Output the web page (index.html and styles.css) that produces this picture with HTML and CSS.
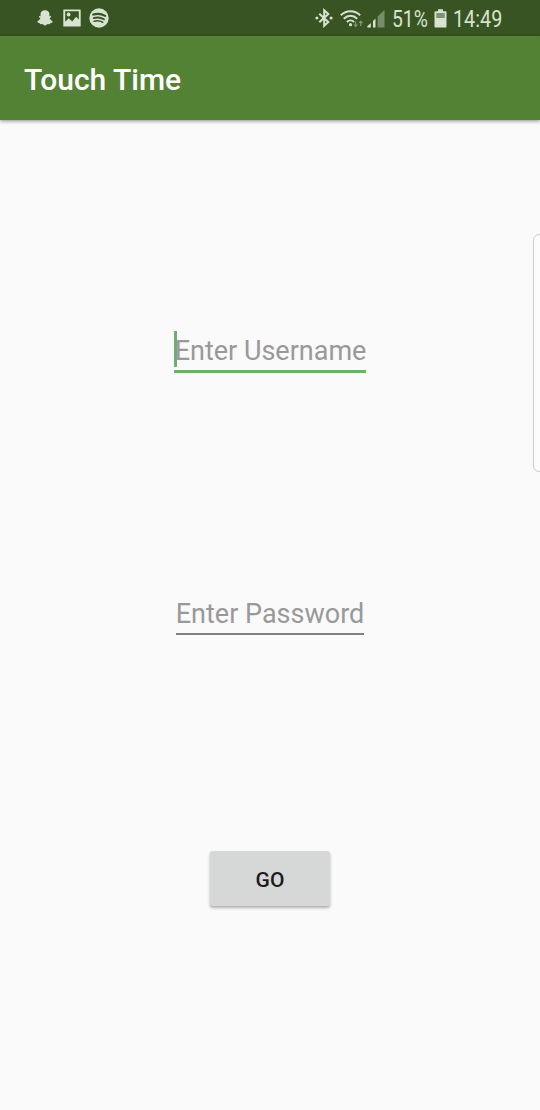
FILE: index.html
```html
<!DOCTYPE html>
<html lang="en">
<head>
<meta charset="utf-8">
<title>Touch Time</title>
<link rel="stylesheet" href="styles.css">
</head>
<body>
<div class="screen">
  <div class="status">
    <div class="notifications">
      <svg width="16" height="16" viewBox="0 0 16 16"><path fill="currentColor" d="M8 .3C5 .3 3.400 2.100 3.500 4.500l.1 1.700-1.600-.1-.1 1.100 1.500.9C2.900 9.700 1.800 10.900.3 11.500c.3 1.200 1.300 1.500 2.300 1.600l.4 1.100 2.300-.1L8 15.800l2.700-1.700 2.300.1.4-1.100c1-.1 2-.4 2.300-1.600-1.500-.6-2.600-1.800-3.100-3.400l1.500-.9-.1-1.100-1.600.1.1-1.700C12.600 2.100 11 .3 8 .3z"/></svg>
      <svg width="18" height="18" viewBox="0 0 18 18"><path fill="currentColor" fill-rule="evenodd" d="M1 .4h16q.7 0 .7.7v15.800q0 .7-.7.7H1q-.7 0-.7-.7V1.100Q.3.400 1 .4zM2.200 2.300v10.500l3.600-3.600 3.400 3.200 3.900-4.600 2.700 2.800V2.300z"/><circle cx="5.600" cy="5.500" r="1.900" fill="currentColor"/></svg>
      <svg width="20" height="20" viewBox="0 0 20 20"><circle cx="10" cy="10" r="9.700" fill="currentColor"/><g fill="none" stroke="#385422" stroke-linecap="round"><path stroke-width="2.100" d="M4.200 6.600c4-1.200 8.400-.8 12 1.200"/><path stroke-width="1.800" d="M4.700 10.100c3.400-1 7.200-.6 10.300 1.100"/><path stroke-width="1.500" d="M5.100 13.300c3-.8 6-.5 8.700 1"/></g></svg>
    </div>
    <div class="system">
      <svg width="18" height="20" viewBox="0 0 18 20"><path fill="none" stroke="currentColor" stroke-width="2" d="M4.300 5.800l9 8.200L9.200 17.700V2.300l4.100 3.700-9 8.200"/><circle cx="1.900" cy="10" r="1.500" fill="currentColor"/><circle cx="16.100" cy="10" r="1.500" fill="currentColor"/></svg>
      <svg class="wifi" width="24" height="20" viewBox="0 0 24 20"><g fill="none" stroke="currentColor" stroke-width="2"><path d="M.8 6.200c5.600-5.300 13.800-5.300 19.400 0"/><path d="M3.800 9.700c4-3.800 9.400-3.800 13.400 0"/><path d="M6.900 13c2.100-2 5.100-2 7.200 0"/></g><circle cx="10.500" cy="15.700" r="1.600" fill="currentColor"/><g fill="currentColor" opacity=".45"><path d="M14.900 12.500h1.400v3.100H18l-2.400 2.800-2.400-2.800h1.700z"/><path d="M20.800 11.200l2.400 2.800h-1.700v3.100h-1.400V14h-1.700z"/></g></svg>
      <svg class="signal" width="18" height="20" viewBox="0 0 18 20"><path fill="currentColor" d="M.3 18.500v-1.300L3.800 14v4.500zM6 18.500V12l2.500-2.400v8.900z"/><path fill="currentColor" opacity=".4" d="M10.600 18.500V7.600L17.500 1v17.500z"/></svg>
      <span class="reading percent"><span class="narrow">51%</span></span>
      <svg class="battery" width="13" height="19" viewBox="0 0 13 19"><path fill="currentColor" d="M4 .3h5v1.900h2.500q1 0 1 1v14.300q0 1-1 1h-10q-1 0-1-1V3.200q0-1 1-1H4z"/><path fill="#7f9170" d="M2.300 4h8.400v5H2.300z"/></svg>
      <span class="reading clock"><span class="narrow">14:49</span></span>
    </div>
  </div>
  <header class="appbar"><h1 class="title">Touch Time</h1></header>
  <main class="form">
    <div class="field username"><span class="hint">Enter Username</span><span class="caret"></span></div>
    <div class="field password"><span class="hint">Enter Password</span></div>
    <button class="go" type="button">GO</button>
    <div class="edge-handle"></div>
  </main>
</div>
</body>
</html>
```
FILE: styles.css
```css
* { box-sizing: border-box; }
body { margin: 0; background: #fafafa; font-family: Roboto, sans-serif; }
svg { display: block; flex: none; }
.screen { width: 540px; height: 1110px; display: flex; flex-direction: column; overflow: hidden; }
.status { height: 36px; flex: none; display: flex; justify-content: space-between; align-items: center; padding: 0 37px; background: #385422; color: #d8e2d0; }
.notifications { display: flex; align-items: center; gap: 10px; }
.notifications svg:last-child { margin-left: -2px; }
.system { display: flex; align-items: center; }
.wifi { margin: 1px 0 0 7px; }
.signal { margin: 1px 0 0 3px; }
.reading { height: 26px; font-size: 23px; line-height: 26px; white-space: nowrap; margin-top: 4px; }
.narrow { display: inline-block; transform-origin: left center; }
.percent { width: 36px; margin-left: 7px; }
.percent .narrow { transform: scaleX(.84); }
.battery { margin-left: 6px; }
.clock { width: 50px; margin-left: 6px; }
.clock .narrow { transform: scaleX(.86); }
.appbar { position: relative; height: 84px; flex: none; display: flex; align-items: center; padding: 3px 24px 0; background: #548235; box-shadow: 0 1px 4px rgba(0, 0, 0, .45); }
.title { margin: 0; color: #fff; font-size: 30px; line-height: 36px; font-weight: 500; white-space: nowrap; }
.form { position: relative; flex: 1; display: flex; flex-direction: column; align-items: center; padding-top: 210px; }
.field { display: flex; justify-content: center; font-size: 27px; line-height: 36px; color: #999; white-space: nowrap; }
.username { position: relative; width: 192px; height: 43px; padding: 3px 0 0 1px; border-bottom: 3px solid #6fae70; }
.caret { position: absolute; left: 0; top: 1px; width: 3px; height: 36px; background: #6fae70; }
.password { width: 188px; height: 42px; margin-top: 220px; padding-top: 3px; border-bottom: 2px solid #808080; }
.go { width: 120px; height: 55px; margin-top: 216px; padding: 4px 0 0; border: 0; border-radius: 3px; background: #d6d7d7; box-shadow: 0 2px 3px rgba(0, 0, 0, .3); color: #1c1c1c; font: 500 21px/25px Roboto, sans-serif; }
.edge-handle { position: absolute; right: -8px; top: 114px; width: 15px; height: 238px; border: 1px solid #ccc; border-radius: 6px; background: #fcfcfc; }
```
